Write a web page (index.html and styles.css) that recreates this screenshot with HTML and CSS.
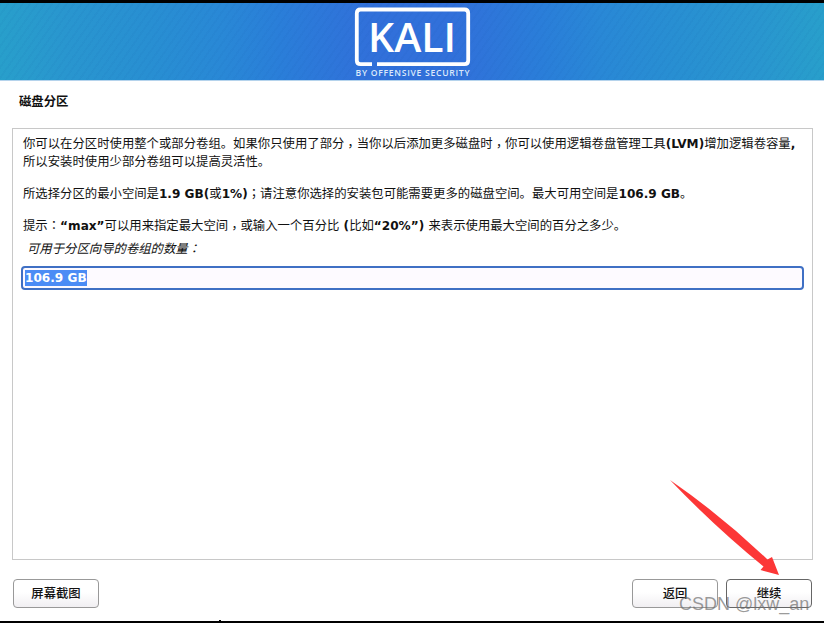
FILE: index.html
```html
<!DOCTYPE html>
<html lang="zh-CN">
<head>
<meta charset="utf-8">
<title>磁盘分区</title>
<link rel="stylesheet" href="styles.css">
</head>
<body>
<div class="screen">
  <header class="banner">
    <svg class="logo" width="130" height="77" viewBox="347 3 130 77">
      <path class="frame" d="M372 64.2H360.500Q356.800 64.200 356.800 60.500V13.200Q356.800 9.500 360.500 9.500H464.500Q468.200 9.500 468.200 13.200V60.500Q468.200 64.200 464.500 64.200H377"/>
      <text class="wordmark" x="368" y="51.500" textLength="88" lengthAdjust="spacingAndGlyphs">KALI</text>
      <text class="tagline" x="355.500" y="75.600" textLength="114">BY OFFENSIVE SECURITY</text>
    </svg>
  </header>
  <h1>磁盘分区</h1>
  <main class="panel">
    <p>你可以在分区时使用整个或部分卷组。如果你只使用了部分<i class="comma" lang="zh-TW">，</i>当你以后添加更多磁盘时<i class="comma" lang="zh-TW">，</i>你可以使用逻辑卷盘管理工具<b>(LVM)</b>增加逻辑卷容量<b>,</b><br>所以安装时使用少部分卷组可以提高灵活性。</p>
    <p>所选择分区的最小空间是<b>1.9 GB(</b>或<b>1%)</b><i lang="zh-TW">；</i>请注意你选择的安装包可能需要更多的磁盘空间。最大可用空间是<b>106.9 GB</b>。</p>
    <p>提示<i lang="zh-TW">：</i><b>“max”</b>可以用来指定最大空间<i class="comma" lang="zh-TW">，</i>或输入一个百分比<b> (</b>比如<b>“20%”) </b>来表示使用最大空间的百分之多少。</p>
    <div class="label">可用于分区向导的卷组的数量<i lang="zh-TW">：</i></div>
    <div class="field"><span class="selected">106.9 GB</span></div>
  </main>
  <footer>
    <button>屏幕截图</button>
    <button class="back">返回</button>
    <button class="next">继续</button>
  </footer>
  <svg class="arrow" width="112" height="98" viewBox="669 479 112 98">
    <path d="M670 480Q722 516 767.500 559.500L772 557L779 575L760.500 570L763.500 566.500Q715 527 670 480Z"/>
  </svg>
  <div class="watermark">CSDN @lxw_an</div>
  <span class="speck"></span>
</div>
</body>
</html>
```
FILE: styles.css
```css
* { box-sizing: border-box; }
body {
  margin: 0;
  background: #fff;
  color: #111;
  font-family: "Noto Sans CJK SC", sans-serif;
  font-size: 12.37px;
}
.screen {
  position: relative;
  display: flex;
  flex-direction: column;
  width: 824px;
  height: 623px;
  overflow: hidden;
  border-top: 3px solid #000;
  border-bottom: 2px solid #000;
}
.banner {
  flex: none;
  height: 78px;
  display: flex;
  justify-content: center;
  border-bottom: 1px solid #b5d3ec;
  background:
    repeating-linear-gradient(125deg, rgba(10, 70, 150, .045) 0 2px, transparent 2px 6px),
    linear-gradient(90deg, #289fcb 0, #2996cf 8%, #288fd2 18%, #2988d6 27%, #2a7ed9 34%, #3170da 45%, #3170da 55%, #2a7ed9 66%, #2988d6 73%, #288fd2 82%, #2996cf 92%, #289fcb 100%);
}
.logo { margin-right: 1px; }
.frame { fill: none; stroke: #fff; stroke-width: 3.8; }
.wordmark { font: 600 40px "Open Sans", sans-serif; fill: #fff; }
.tagline { font: 600 8.6px "Open Sans", sans-serif; fill: #dce9fb; }
h1 {
  margin: 11px 0 0 19px;
  height: 18px;
  line-height: 18px;
  font-size: 12.37px;
  font-weight: 700;
}
.panel {
  margin: 18px 11px 0 12px;
  height: 432px;
  padding: 5px 8px 0 8px;
  border: 1px solid #c8c8c8;
}
.panel p {
  margin: 0 0 14px 2px;
  line-height: 18px;
  white-space: nowrap;
}
p b, .selected {
  font-family: "DejaVu Sans", sans-serif;
  font-size: 12.1px;
  font-weight: 700;
  line-height: 1;
  white-space: pre;
}
i {
  font-family: "Noto Sans CJK TC", sans-serif;
  font-style: normal;
}
.comma {
  display: inline-block;
  line-height: 1;
  transform: translateY(3px);
}
.label {
  margin: -9px 0 0 6px;
  line-height: 18px;
  font-style: italic;
}
.label i { font-style: italic; }
.field {
  height: 24px;
  margin-top: 9px;
  padding: 2px 2px;
  border: 2px solid #3f70c4;
  border-radius: 4px;
  background: #fdfaff;
  display: flex;
  align-items: center;
}
.selected {
  height: 16px;
  line-height: 17px;
  background: #4b8cf5;
  color: #fff;
}
footer {
  display: flex;
  gap: 8px;
  margin: 19px 12px 0 13px;
}
button {
  width: 86px;
  height: 29px;
  padding: 0 0 1px;
  border: 1px solid #999;
  border-radius: 4px;
  background: linear-gradient(#fff 45%, #f1eff2);
  color: #111;
  font: 500 12.37px "Noto Sans CJK SC", sans-serif;
}
.back { margin-left: auto; }
.next { border-color: #666; }
.arrow { position: absolute; left: 669px; top: 476px; }
.arrow path { fill: #fc3737; }
.watermark {
  position: absolute;
  left: 679px;
  top: 590px;
  font: 18px/22px "Liberation Sans", sans-serif;
  color: rgba(110, 110, 110, .7);
  white-space: nowrap;
}
.speck { position: absolute; left: 219px; bottom: 0; width: 2px; height: 1px; background: #000; }
```
